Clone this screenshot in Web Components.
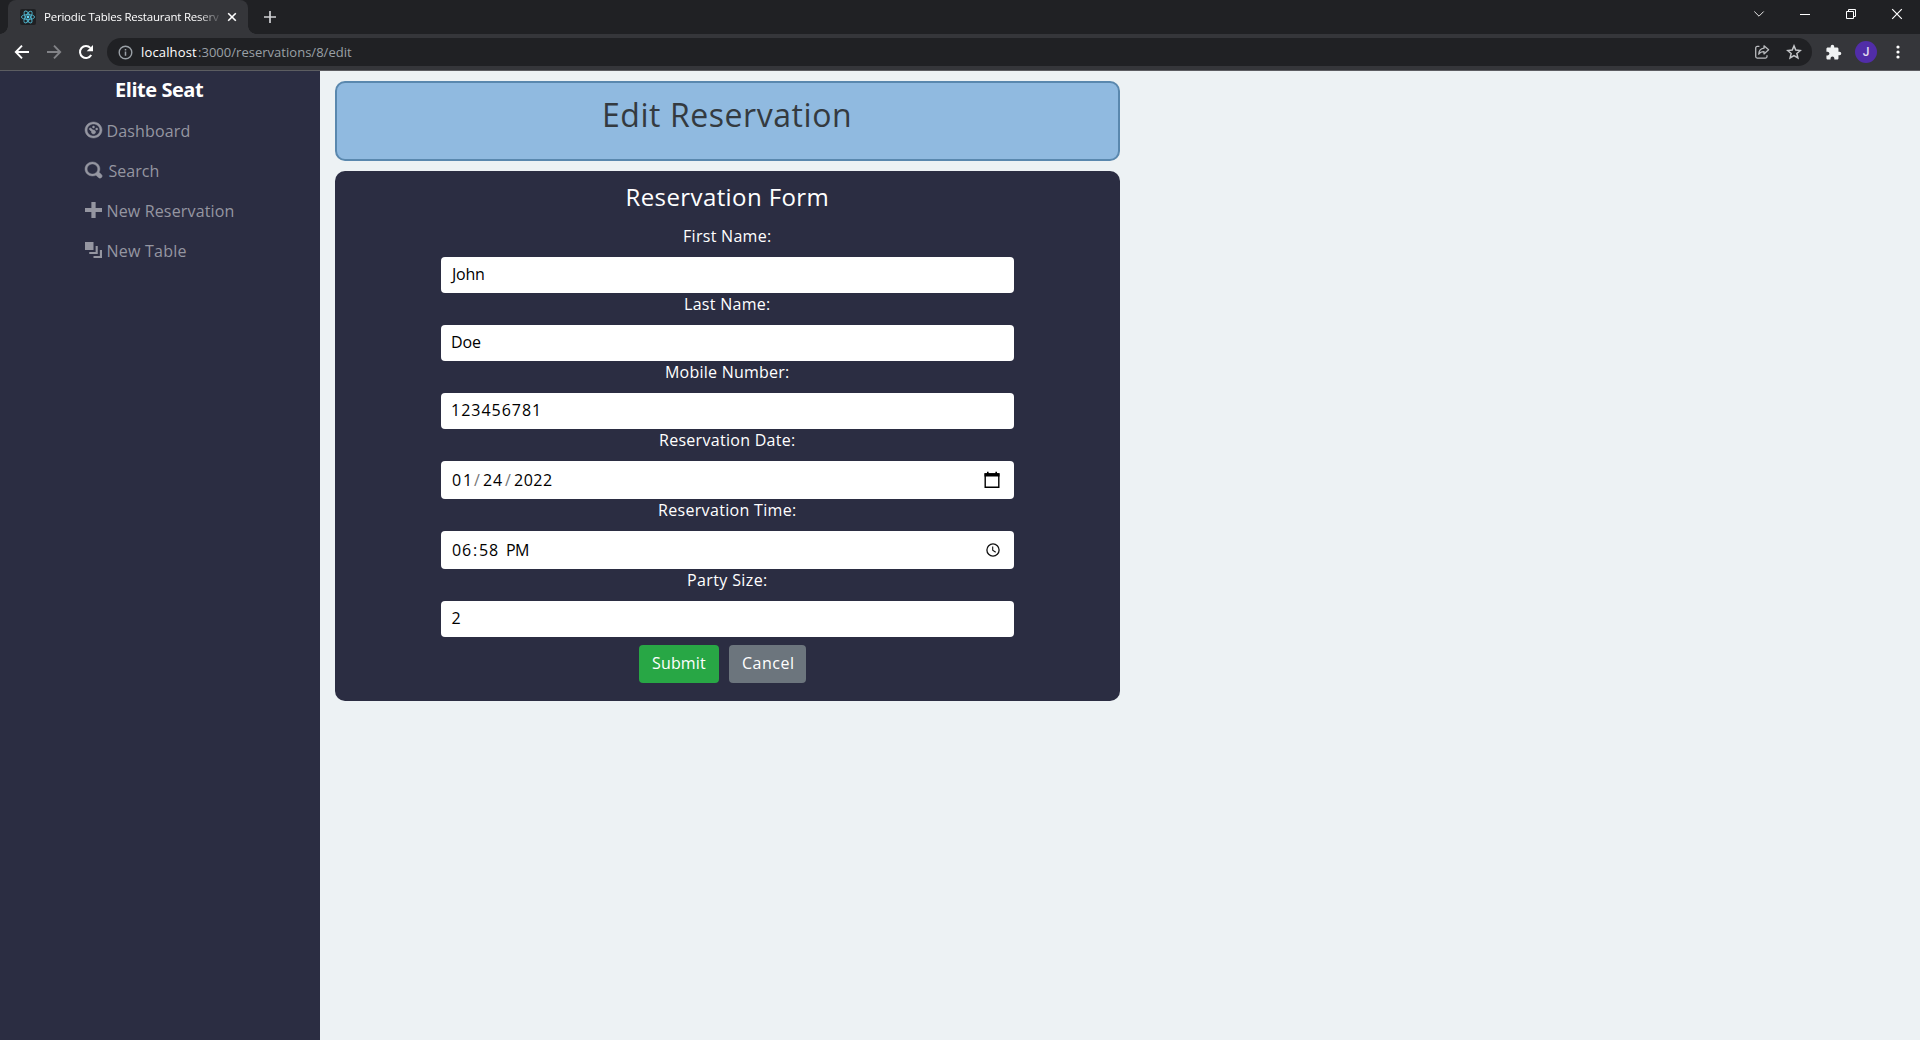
<!DOCTYPE html>
<html lang="en">
<head>
<meta charset="utf-8">
<title>Periodic Tables Restaurant Reservations</title>
<style>
html,body{margin:0;height:100%;overflow:hidden;background:#edf2f4;font-family:"Open Sans","Noto Sans",sans-serif;font-size:16px}
</style>
</head>
<body>
<app-window></app-window>
<script>
const define=(name,html,after)=>customElements.define(name,class extends HTMLElement{
  connectedCallback(){
    if(this.shadowRoot)return;
    this.attachShadow({mode:'open'}).innerHTML=typeof html==='function'?html(this):html;
    if(after)after(this);
  }
});

// Text run whose letter spacing is adjusted so that its ink is exactly `w` pixels wide.
const ctx=document.createElement('canvas').getContext('2d');
define('fit-text','<style>:host{display:inline-block;white-space:pre;flex:none;text-align:left}span{display:inline-block}</style><span></span>',el=>{
  const t=el.getAttribute('text'),w=+el.getAttribute('w'),s=el.shadowRoot.querySelector('span');
  s.textContent=t;
  const cs=getComputedStyle(el);
  ctx.font=`${cs.fontWeight} ${cs.fontSize} ${cs.fontFamily}`;
  const m=ctx.measureText(t),ink=m.actualBoundingBoxRight+m.actualBoundingBoxLeft;
  el.style.width=w+'px';
  s.style.letterSpacing=(t.length>1?(w-ink)/(t.length-1):0).toFixed(3)+'px';
  s.style.marginLeft=m.actualBoundingBoxLeft+'px';
});

const icons={
  dashboard:'<path d="M4 0c-2.2 0-4 1.8-4 4s1.8 4 4 4 4-1.8 4-4-1.8-4-4-4zm0 1c1.66 0 3 1.34 3 3s-1.34 3-3 3-3-1.34-3-3 1.34-3 3-3zm0 1c-.28 0-.5.22-.5.5s.22.5.5.5.5-.22.5-.5-.22-.5-.5-.5zm-1.66 1a.5.5 0 0 0-.19.84l.91.91c-.02.08-.06.16-.06.25 0 .55.45 1 1 1s1-.45 1-1-.45-1-1-1c-.09 0-.17.04-.25.06l-.91-.91a.5.5 0 0 0-.44-.16.5.5 0 0 0-.06 0zm3.16 0c-.28 0-.5.22-.5.5s.22.5.5.5.5-.22.5-.5-.22-.5-.5-.5z" stroke="currentColor" stroke-width=".22"/>',
  search:'<path d="M3.5 0c-1.93 0-3.5 1.57-3.5 3.5s1.57 3.5 3.5 3.5c.59 0 1.17-.14 1.66-.41a1 1 0 0 0 .13.13l1 1a1.02 1.02 0 1 0 1.44-1.44l-1-1a1 1 0 0 0-.16-.13c.27-.49.44-1.06.44-1.66 0-1.93-1.55-3.5-3.5-3.5zm0 1c1.39 0 2.5 1.11 2.5 2.5 0 .66-.24 1.27-.66 1.72-.01.01-.02.02-.03.03a1 1 0 0 0-.13.13c-.44.4-1.04.63-1.69.63-1.39 0-2.5-1.11-2.5-2.5s1.11-2.5 2.5-2.5z" stroke="currentColor" stroke-width=".22"/>',
  plus:'<path d="M3 0v3h-3v2h3v3h2v-3h3v-2h-3v-3h-2z"/>',
  layers:'<path d="M0 0v4h4v-4h-4zm5 2v3h-3v1h4v-4h-1zm2 2v3h-3v1h4v-4h-1z"/>'
};

define('browser-tabs',`<style>
:host{display:flex;height:34px;background:#202124;color:#fff}
svg{display:block;flex:none}
.tab{width:240px;margin-left:8px;height:34px;background:#35363a;border-radius:8px 8px 0 0;display:flex;align-items:center;position:relative;box-sizing:border-box;padding-left:12px}
.tab:before,.tab:after{content:"";position:absolute;bottom:0;width:8px;height:8px}
.tab:before{left:-8px;background:radial-gradient(circle at 0 0,transparent 7.5px,#35363a 8px)}
.tab:after{right:-8px;background:radial-gradient(circle at 100% 0,transparent 7.5px,#35363a 8px)}
.title{width:174px;margin-left:9px;font-size:11.5px;line-height:34px;height:34px;-webkit-mask:linear-gradient(90deg,#000 88%,rgba(0,0,0,.15));mask:linear-gradient(90deg,#000 88%,rgba(0,0,0,.15))}
.x{margin-left:8px}.new{margin:11px 0 0 16px}
.win{margin-left:auto;display:flex;padding:8px 17px 0 0;gap:34px}
</style>
<div class="tab">
<svg width="16" height="16" viewBox="0 0 16 16"><rect width="16" height="16" rx="2" fill="#1f2023"/><g fill="none" stroke="#4fb3cc" stroke-width=".9"><ellipse cx="8" cy="8" rx="6.6" ry="2.5"/><ellipse cx="8" cy="8" rx="6.6" ry="2.5" transform="rotate(60 8 8)"/><ellipse cx="8" cy="8" rx="6.6" ry="2.5" transform="rotate(120 8 8)"/></g><circle cx="8" cy="8" r="1.4" fill="#61dafb"/></svg>
<div class="title"><fit-text w="174" text="Periodic Tables Restaurant Reserv"></fit-text></div>
<svg class="x" width="10" height="10" viewBox="0 0 10 10"><path d="M1.2 1.2l7.6 7.6M8.8 1.2L1.2 8.8" stroke="#fff" stroke-width="1.6"/></svg>
</div>
<svg class="new" width="12" height="12" viewBox="0 0 12 12"><path d="M6 0v12M0 6h12" stroke="#d0d1d4" stroke-width="1.7"/></svg>
<div class="win">
<svg width="12" height="12" viewBox="0 0 12 12"><path d="M1.3 3.5L6 8.2l4.7-4.7" fill="none" stroke="#e8e8e8"/></svg>
<svg width="12" height="12" viewBox="0 0 12 12"><path d="M1 6.5h10" stroke="#fff"/></svg>
<svg width="12" height="12" viewBox="0 0 12 12"><path d="M1.5 3.5h7v7h-7zM3.5 3V1.5h7v7H9" fill="none" stroke="#fff"/></svg>
<svg width="12" height="12" viewBox="0 0 12 12"><path d="M1.2 1.2l9.6 9.6M10.8 1.2l-9.6 9.6" stroke="#fff" stroke-width="1.2"/></svg>
</div>`);

define('browser-toolbar',`<style>
:host{display:flex;align-items:center;height:36px;background:#35363a;border-bottom:1px solid #5c5d61;padding:0 10px 0 14px}
svg{display:block;flex:none}
.fwd,.rel{margin-left:16px}
.bar{flex:1;height:28px;border-radius:14px;background:#202124;margin-left:13px;margin-right:13px;display:flex;align-items:center;padding:0 10px 0 11px;font-size:13px;line-height:26px;box-sizing:border-box}
.host{margin-left:9px;color:#fff}.path{color:#9aa0a6;margin-left:1px}
.star{margin-left:16px}.share{margin-left:auto}
.av{width:22px;height:22px;border-radius:50%;background:#512da8;color:#e2dcf0;font:500 12px/22px Roboto,sans-serif;text-align:center;margin-left:13px}
.dots{margin-left:19px;margin-right:10px}
</style>
<svg width="16" height="16" viewBox="0 0 16 16"><path d="M15 8H2.2M8 1.6L1.8 8 8 14.4" fill="none" stroke="#fff" stroke-width="1.9"/></svg>
<svg class="fwd" width="16" height="16" viewBox="0 0 16 16"><path d="M1 8h12.8M8 1.6L14.2 8 8 14.4" fill="none" stroke="#828387" stroke-width="1.9"/></svg>
<svg class="rel" width="16" height="16" viewBox="0 0 16 16"><path d="M13.2 11A6 6 0 1 1 12.4 3.9" fill="none" stroke="#fff" stroke-width="2"/><path d="M15 1v6.3H8.7z" fill="#fff"/></svg>
<div class="bar">
<svg width="15" height="15" viewBox="0 0 15 15"><circle cx="7.5" cy="7.5" r="6.3" fill="none" stroke="#9aa0a6" stroke-width="1.4"/><path d="M7.5 6.6v4.2M7.5 4v1.5" stroke="#9aa0a6" stroke-width="1.5"/></svg>
<fit-text class="host" w="55" text="localhost"></fit-text><fit-text class="path" w="154" text=":3000/reservations/8/edit"></fit-text>
<svg class="share" width="16" height="16" viewBox="0 0 16 16"><path d="M5.4 2.4H3.200A1.500 1.500 0 0 0 1.700 3.900v8.700a1.500 1.500 0 0 0 1.500 1.500h8.300a1.500 1.500 0 0 0 1.500-1.500v-1.300" fill="none" stroke="#b9bbbe" stroke-width="1.300"/><path d="M10 1.800l4.600 4L10 9.900V7.600c-2.600 0-4.200.7-5.300 2.600.2-3.200 1.800-5.600 5.300-6z" fill="none" stroke="#b9bbbe" stroke-width="1.300" stroke-linejoin="round"/></svg>
<svg class="star" width="16" height="16" viewBox="0 0 16 16"><path d="M8 1.900l1.750 4.200 4.600.4-3.500 3 1.050 4.450L8 11.600l-3.900 2.350L5.150 9.500l-3.500-3 4.600-.4z" fill="none" stroke="#c4c6c9" stroke-width="1.500"/></svg>
</div>
<svg width="17" height="17" viewBox="0 0 24 24" fill="#f1f3f4"><path d="M20.500 11H19V7c0-1.100-.9-2-2-2h-4V3.500a2.500 2.500 0 0 0-5 0V5H4c-1.100 0-1.990.9-1.990 2v3.800H3.500c1.490 0 2.700 1.210 2.700 2.700s-1.210 2.700-2.700 2.700H2V20c0 1.100.9 2 2 2h3.800v-1.500c0-1.490 1.210-2.700 2.700-2.700s2.700 1.210 2.700 2.700V22H17c1.100 0 2-.9 2-2v-4h1.500a2.500 2.500 0 0 0 0-5z"/></svg>
<div class="av">J</div>
<svg class="dots" width="4" height="14" viewBox="0 0 4 14" fill="#fff"><circle cx="2" cy="2" r="1.600"/><circle cx="2" cy="7" r="1.600"/><circle cx="2" cy="12" r="1.600"/></svg>`);

define('nav-item',el=>`<style>
:host{display:flex;height:40px;line-height:24px;color:#9596a1;padding-left:85px}
svg{display:block;margin-top:3px;flex:none;overflow:visible}
fit-text{margin-left:${el.getAttribute('gap')||5.5}px}
</style><svg width="17" height="16" viewBox="0 0 8 8" preserveAspectRatio="none" fill="currentColor">${icons[el.getAttribute('icon')]}</svg><fit-text w="${el.getAttribute('w')}" text="${el.getAttribute('label')}"></fit-text>`);

define('side-bar',`<style>
:host{display:block;width:320px;flex:none;background:#2b2d42}
.brand{color:#fff;font-weight:700;font-size:20px;line-height:38px;height:48px;padding-left:116px}
</style>
<div class="brand"><fit-text w="88" text="Elite Seat"></fit-text></div>
<nav-item icon="dashboard" w="82" label="Dashboard"></nav-item>
<nav-item icon="search" gap="6.5" w="50" label="Search"></nav-item>
<nav-item icon="plus" w="126" label="New Reservation"></nav-item>
<nav-item icon="layers" w="79" label="New Table"></nav-item>`);

define('form-field',el=>`<style>
:host{display:block}
.label{height:32px;line-height:22px;color:#fff;font-weight:500;display:flex;justify-content:center}
.box{height:36px;box-sizing:border-box;background:#fff;border-radius:4px;display:flex;align-items:center;padding:0 14px 2px 11px;color:#000;line-height:24px}
:host([tall]) .box{height:38px;padding-bottom:1px}
::slotted(svg){margin-left:auto}
</style><div class="label"><fit-text w="${el.getAttribute('w')}" text="${el.getAttribute('label')}"></fit-text></div><div class="box"><slot></slot></div>`);

define('action-button',`<style>
:host{display:flex;height:38px;box-sizing:border-box;padding-bottom:2px;border-radius:4px;color:#fff;font-weight:500;line-height:24px;align-items:center;justify-content:center}
</style><slot></slot>`);

define('reservation-form',`<style>
:host{display:block;height:530px;box-sizing:border-box;background:#2b2d42;border-radius:10px;padding:0 106px}
.head{height:54px;line-height:51px;font-size:24px;font-weight:500;color:#fff;display:flex;justify-content:center}
.actions{display:flex;gap:10px;padding:8px 0 0 198px}
.s{width:80px;background:#28a745}.c{width:77px;background:#6c757d}
.sep{color:#777}
svg{display:block}
</style>
<div class="head"><fit-text w="200" text="Reservation Form"></fit-text></div>
<form-field label="First Name:" w="87"><fit-text w="34" text="John" style="margin-left:-2px"></fit-text></form-field>
<form-field label="Last Name:" w="85"><fit-text w="29" text="Doe"></fit-text></form-field>
<form-field label="Mobile Number:" w="123"><fit-text w="86" text="123456781"></fit-text></form-field>
<form-field tall label="Reservation Date:" w="135"><fit-text w="17" text="01"></fit-text><fit-text class="sep" w="5" style="margin:0 4px 0 5px" text="/"></fit-text><fit-text w="19" text="24"></fit-text><fit-text class="sep" w="5" style="margin:0 4px 0 3px" text="/"></fit-text><fit-text w="38" text="2022"></fit-text>
<svg width="16" height="18" viewBox="0 0 16 18"><path d="M1.200 3h13.600v13.300H1.200z" fill="none" stroke="#000" stroke-width="1.400"/><path d="M.5 2.300h15v3.300H.5zM3 .8h1.600v2H3zM11.400.8H13v2h-1.600z"/></svg></form-field>
<form-field tall label="Reservation Time:" w="137"><fit-text w="19" text="06"></fit-text><fit-text w="2" style="margin:0 4px 0 3px" text=":"></fit-text><fit-text w="18" text="58"></fit-text><fit-text w="21" style="margin-left:9px" text="PM"></fit-text>
<svg width="14" height="14" viewBox="0 0 14 14" fill="none" stroke="#111"><circle cx="7" cy="7" r="6.100" stroke-width="1.300"/><path d="M6.700 3.400v3.900l3 2" stroke-width="1.100"/></svg></form-field>
<form-field label="Party Size:" w="79"><fit-text w="8" text="2" style="margin-left:-.5px"></fit-text></form-field>
<div class="actions"><action-button class="s"><fit-text w="54" text="Submit"></fit-text></action-button><action-button class="c"><fit-text w="51" text="Cancel"></fit-text></action-button></div>`);

define('page-title',`<style>
:host{display:flex;justify-content:center;height:80px;box-sizing:border-box;border:2px solid #5a88ae;border-radius:10px;background:#90bae0;color:#343a40;font-size:32px;line-height:63px}
</style><fit-text w="245" text="Edit Reservation"></fit-text>`);

define('app-window',`<style>
:host{display:flex;flex-direction:column;width:1920px;height:1040px}
.page{display:flex;flex:1}
.main{width:785px;padding:10px 0 0 15px;display:flex;flex-direction:column;gap:10px}
</style>
<browser-tabs></browser-tabs><browser-toolbar></browser-toolbar>
<div class="page"><side-bar></side-bar><div class="main"><page-title></page-title><reservation-form></reservation-form></div></div>`);
</script>
</body>
</html>
